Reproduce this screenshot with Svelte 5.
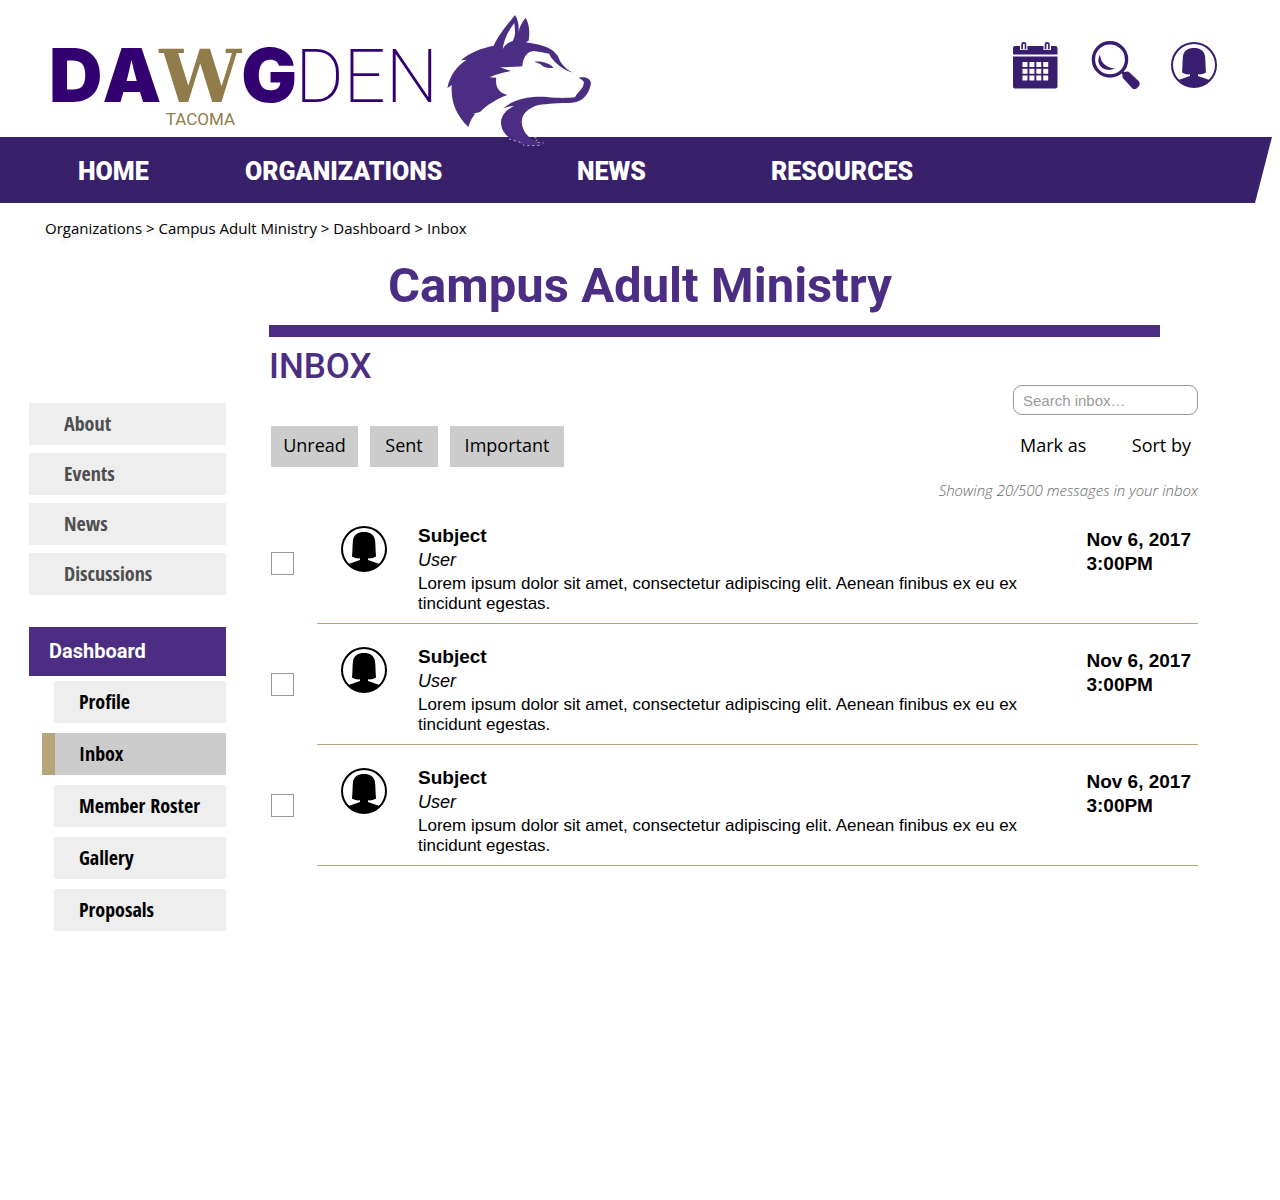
<script>
  const nav = ['HOME', 'ORGANIZATIONS', 'NEWS', 'RESOURCES'];
  const crumbs = ['Organizations', 'Campus Adult Ministry', 'Dashboard'];
  const pages = ['About', 'Events', 'News', 'Discussions'];
  const tools = ['Profile', 'Inbox', 'Member Roster', 'Gallery', 'Proposals'];
  const filters = ['Unread', 'Sent', 'Important'];
  const messages = [1, 2, 3].map((id) => ({
    id,
    subject: 'Subject',
    user: 'User',
    body: 'Lorem ipsum dolor sit amet, consectetur adipiscing elit. Aenean finibus ex eu ex tincidunt egestas.',
    date: 'Nov 6, 2017',
    time: '3:00PM'
  }));
  let search = $state('');
</script>

{#snippet person()}
  <svg class="person" viewBox="0 0 46 46" aria-hidden="true">
    <circle cx="23" cy="23" r="22" fill="none" stroke="currentColor" stroke-width="2" />
    <path
      fill="currentColor"
      d="M11 30.500C11.500 25 11.500 18 12 14C13 8.500 17 6 23 6S33 8.500 34 14C34.500 18 34.500 25 35 30.500C32.500 32 29.500 32.600 27 32.300V34L38.500 38C34.500 42.500 29 45 23 45S11.500 42.500 7.500 38L19 34V32.300C16.500 32.600 13.500 32 11 30.500Z"
    />
  </svg>
{/snippet}

<header>
  <a class="logo" href="#home" aria-label="Dawg Den Tacoma">
    <span class="wordmark">
      <span class="heavy">D</span><span class="heavy">A</span><span class="slab">W<small>TACOMA</small></span><span class="heavy">G</span><span class="thin">DEN</span>
    </span>
    <svg class="husky" viewBox="0 0 510 450" aria-hidden="true">
      <path
        fill="#4b2e83"
        fill-rule="evenodd"
        d="M240 30C220 55 190 90 176 122C140 129 105 142 78 166L95 164C62 184 44 215 37 250L50 240C48 290 60 325 100 366C104 350 112 337 120 327L114 326L135 321C155 300 185 282 217 270C190 262 180 244 184 218L164 217C180 209 200 202 228 198L195 187C215 186 240 186 262 184C263 160 275 140 295 138C325 142 345 147 368 152C375 175 392 192 412 203C388 194 366 180 345 152C352 152 357 147 355 138C335 124 310 117 272 112L281 107C285 80 283 58 272 38C260 52 254 66 250 82C253 62 249 44 240 30ZM238 54C240 75 243 92 233 108C220 112 210 121 203 132C207 104 220 76 238 54Z"
      />
      <path fill="#4b2e83" d="M355 138L368 152C375 175 392 192 412 203C388 194 360 178 343 148Z" />
      <path fill="#4b2e83" d="M298 170C320 167 343 174 356 188C340 191 325 188 316 177Z" />
      <path
        fill="#4b2e83"
        d="M204 311C235 283 280 273 335 276C370 280 400 279 420 277C428 260 444 256 447 232C443 223 436 223 432 218C450 215 466 219 468 235C463 265 444 292 412 293C370 294 340 296 310 300C278 310 260 327 260 352C262 385 290 411 327 418C305 424 270 421 248 411C215 399 198 378 198 352C199 330 215 314 237 303C225 303 214 306 204 311Z"
      />
      <path
        fill="none"
        stroke="#fff"
        stroke-width="2"
        stroke-dasharray="6 9"
        d="M222 402L258 413L268 422L322 421M298 398L311 399M302 408L309 403M308 412L326 414"
      />
    </svg>
  </a>
  <div class="actions">
    <button type="button" aria-label="Calendar">
      <svg width="48" height="48" viewBox="0 0 48 48">
        <path fill="#391d6e" d="M2 5H42Q44.500 5 44.500 7V13.500H0V7Q0 5 2 5ZM0 15.500H44.500V45.500Q44.500 47.500 42.500 47.500H2Q0 47.500 0 45.500Z" />
        <path fill="#fff" d="M7 3H14.500V9H7ZM30.500 3H38V9H30.500Z" />
        <path fill="#391d6e" d="M8.300 8.300V3Q8.300 1 10.800 1T13.300 3V8.300ZM31.700 8.300V3Q31.700 1 34.200 1T36.700 3V8.300Z" />
        <path fill="#fff" d="M10 3H11.700V8.300H10ZM33.400 3H35.100V8.300H33.400Z" />
        <path
          stroke="#fff"
          stroke-width="5"
          stroke-dasharray="5 1.900"
          d="M9.500 23.500H36M9.500 30.300H36M9.500 37.100H36"
        />
      </svg>
    </button>
    <button type="button" aria-label="Search">
      <svg width="50" height="50" viewBox="0 0 50 50" fill="none" stroke="#391d6e">
        <circle cx="19" cy="19.400" r="16.600" stroke-width="3.400" />
        <path stroke-width="3" d="M30.500 31L34 35" />
        <path fill="#391d6e" stroke="none" d="M9 14.500C9.500 22 14 27.500 24 28.500C15 33 3 26 9 14.500Z" />
        <path fill="#391d6e" stroke-width="3" stroke-linejoin="round" d="M33 37V33.500L37 33L47 42.500V45L44.500 47.500H42.500Z" />
      </svg>
    </button>
    <button class="account" type="button" aria-label="Account">{@render person()}</button>
  </div>
</header>

<nav class="main-nav" aria-label="Main">
  {#each nav as item}
    <a href="#{item.toLowerCase()}">{item}</a>
  {/each}
</nav>

<nav class="crumbs" aria-label="Breadcrumb">
  {#each crumbs as crumb}<a href="#{crumb.toLowerCase().replaceAll(' ', '-')}">{crumb}</a>{' > '}{/each}<span aria-current="page">Inbox</span>
</nav>

<h1>Campus Adult Ministry</h1>

<div class="layout">
  <aside>
    <nav class="pages" aria-label="Organization">
      {#each pages as page}
        <a href="#{page.toLowerCase()}">{page}</a>
      {/each}
    </nav>
    <a class="dashboard" href="#dashboard">Dashboard</a>
    <nav class="tools" aria-label="Dashboard">
      {#each tools as tool}
        <a class:current={tool === 'Inbox'} href="#{tool.toLowerCase().replace(' ', '-')}">{tool}</a>
      {/each}
    </nav>
  </aside>

  <main>
    <div class="rule"></div>
    <h2>INBOX</h2>
    <div class="toolbar">
      <div class="filters">
        {#each filters as filter}
          <button type="button">{filter}</button>
        {/each}
      </div>
      <div class="controls">
        <input type="search" aria-label="Search inbox" placeholder="Search inbox…" bind:value={search} />
        <div class="menus">
          <button type="button" aria-haspopup="menu">Mark as</button>
          <button type="button" aria-haspopup="menu">Sort by</button>
        </div>
      </div>
    </div>
    <p class="count">Showing 20/500 messages in your inbox</p>
    <ul>
      {#each messages as message (message.id)}
        <li>
          <input type="checkbox" aria-label="Select message {message.id}" />
          <article>
            {@render person()}
            <div class="text">
              <h3>{message.subject}</h3>
              <p class="user">{message.user}</p>
              <p>{message.body}</p>
            </div>
            <div class="date">{message.date}<br />{message.time}</div>
          </article>
        </li>
      {/each}
    </ul>
  </main>
</div>

<style>
  :global(body) {
    margin: 0;
    background: #fff;
    color: #000;
    font-family: 'Open Sans', sans-serif;
  }

  a {
    color: inherit;
    text-decoration: none;
  }

  button {
    padding: 0;
    border: 0;
    background: none;
    color: inherit;
    font: inherit;
    cursor: pointer;
  }

  h1,
  h2,
  h3,
  p,
  ul {
    margin: 0;
    padding: 0;
  }

  svg {
    display: block;
  }

  header {
    display: flex;
    justify-content: space-between;
    align-items: flex-start;
    height: 137px;
    padding: 0 63px 0 49px;
    box-sizing: border-box;
  }

  .logo {
    position: relative;
    z-index: 1;
    display: flex;
    align-items: flex-start;
  }

  .wordmark {
    display: flex;
    align-items: baseline;
    padding-top: 30px;
    line-height: 90px;
    color: #330072;
  }

  .heavy {
    font: 900 74px/90px Inter, sans-serif;
  }

  .slab {
    position: relative;
    margin-left: -2px;
    color: #927b4b;
    font: 700 73px/90px 'DejaVu Serif', serif;
  }

  small {
    position: absolute;
    top: 77px;
    left: 0;
    right: 0;
    text-align: center;
    font: 400 17px/22px Roboto, sans-serif;
  }

  .thin {
    margin-left: -2px;
    font: 200 74px/90px Roboto, sans-serif;
  }

  .husky {
    width: 170px;
    height: 150px;
    margin: 5px 0 0 -3px;
  }

  .actions {
    display: flex;
    gap: 30px;
    padding-top: 40px;
    color: #391d6e;
  }

  .account {
    width: 46px;
    height: 50px;
  }

  .person {
    width: 46px;
    height: 46px;
  }

  .main-nav {
    display: grid;
    grid-template-columns: 167px 332px 194px 1fr;
    align-items: center;
    height: 66px;
    margin-right: 8px;
    padding: 3px 0 0 78px;
    box-sizing: border-box;
    background: #38206b;
    clip-path: polygon(0 0, 100% 0, calc(100% - 17px) 100%, 0 100%);
    color: #fff;
    font: 900 25px/32px Roboto, sans-serif;
  }

  .crumbs {
    padding: 15px 45px 0;
    font-size: 15px;
    line-height: 20px;
    text-shadow: 0 4px 4px rgb(0 0 0 / 12%);
  }

  h1 {
    margin: 15px 0 7px;
    color: #4b2e83;
    text-align: center;
    font: 700 49px/65px Roboto, sans-serif;
  }

  .layout {
    display: grid;
    grid-template-columns: 197px 1fr;
    gap: 43px;
    padding: 0 82px 60px 29px;
  }

  aside {
    padding-top: 78px;
    font: 700 20px/42px 'Open Sans Condensed', 'Open Sans', sans-serif;
  }

  .pages,
  .tools {
    display: flex;
    flex-direction: column;
    gap: 8px;
  }

  .pages a {
    padding-left: 35px;
    background: #eee;
    color: #4f4f4f;
  }

  .dashboard {
    display: block;
    margin: 32px 0 5px;
    padding-left: 20px;
    background: #4b2e83;
    color: #fff;
    font: 700 20px/49px Roboto, sans-serif;
  }

  .tools {
    gap: 10px;
    padding-left: 25px;
  }

  .tools a {
    padding-left: 25px;
    background: #eee;
  }

  .tools .current {
    margin-left: -12px;
    padding-left: 24px;
    border-left: 13px solid #b7a57a;
    background: #ccc;
  }

  .rule {
    height: 12px;
    margin-right: 38px;
    background: #4b2e83;
  }

  h2 {
    color: #4b2e83;
    font: 500 35px/60px Roboto, sans-serif;
  }

  .toolbar {
    display: flex;
    justify-content: space-between;
    align-items: flex-end;
    margin-top: -12px;
    padding-left: 2px;
    font-size: 18px;
  }

  .filters {
    display: grid;
    grid-template-columns: 87px 68px 114px;
    gap: 12px;
  }

  .filters button {
    height: 41px;
    padding-bottom: 3px;
    background: #ccc;
  }

  .controls input {
    display: block;
    width: 185px;
    height: 30px;
    box-sizing: border-box;
    padding: 0 9px;
    border: 1px solid #979797;
    border-radius: 9px;
    background: #fff;
    font: 15px/20px 'Liberation Sans', sans-serif;
  }

  .controls input::placeholder {
    color: #9b9b9b;
    opacity: 1;
  }

  .menus {
    display: flex;
    justify-content: space-between;
    height: 52px;
    padding: 0 7px;
  }

  .menus button {
    line-height: 60px;
  }

  .count {
    padding: 13px 0 1px;
    text-align: right;
    color: #666;
    font-size: 15px;
    font-style: italic;
    font-weight: 300;
    line-height: 20px;
  }

  ul {
    list-style: none;
    padding: 2px 0 0 2px;
    font-family: 'Liberation Sans', sans-serif;
  }

  li {
    display: flex;
    align-items: center;
    gap: 23px;
  }

  li input {
    appearance: none;
    flex: none;
    width: 23px;
    height: 23px;
    margin: 0;
    border: 1px solid #979797;
    background: #fff;
  }

  li input:checked {
    background: #4b2e83;
  }

  article {
    display: flex;
    flex: 1;
    align-items: flex-start;
    padding: 23px 7px 9px 24px;
    border-bottom: 1px solid #b7a57a;
  }

  .text {
    flex: 1;
    max-width: 620px;
    margin-left: 31px;
    font-size: 17px;
    line-height: 20px;
  }

  h3 {
    font-size: 19px;
    line-height: 20px;
  }

  .user {
    font-size: 18px;
    font-style: italic;
    line-height: 28px;
  }

  .date {
    margin: 2px 0 0 auto;
    font-size: 19px;
    font-weight: 700;
    line-height: 24px;
  }
</style>
